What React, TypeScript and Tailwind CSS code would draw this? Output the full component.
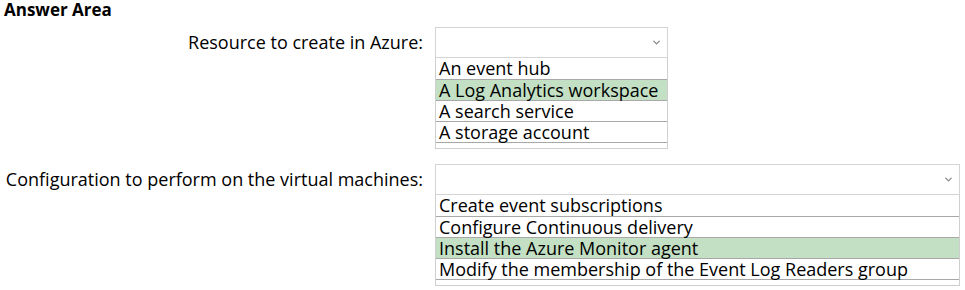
import { ChevronDown } from "lucide-react";

const font = { fontFamily: '"Open Sans", "Noto Sans", sans-serif' };

interface DropProps {
  readonly label: string;
  readonly width: string;
  readonly options: string[];
  readonly picked: number;
}

function Drop({ label, width, options, picked }: DropProps) {
  return (
    <div className="flex items-start">
      {/* label column */}
      <div className="w-[427px] h-[31px] flex items-center justify-end pr-[4px] text-[18px] text-black">
        {label}
      </div>

      {/* select + open list */}
      <div className={`ml-[8px] ${width}`}>
        <div className="h-[31px] border border-[#d4d4d4] flex items-center justify-end pr-[5px]">
          <ChevronDown className="w-[11px] h-[11px] text-[#8a8a8a]" strokeWidth={3} />
        </div>
        <div className="border border-t-0 border-[#cfcfcf] pb-[5px]">
          <div className="border-b border-[#a8a8a8]">
            {options.map((o, i) => (
              <div
                key={o}
                className={`h-[21px] leading-[20px] pl-[3px] text-[18px] text-black whitespace-nowrap ${
                  i > 0 ? "border-t border-[#a8a8a8]" : ""
                } ${i === picked ? "bg-[#c3e0c4]" : ""}`}
              >
                {o}
              </div>
            ))}
          </div>
        </div>
      </div>
    </div>
  );
}

export default function App() {
  return (
    <div className="w-[965px] h-[290px] bg-white overflow-hidden" style={font}>
      <div className="pl-[4px] h-[27px] text-[17px] font-bold leading-[20px] text-black">
        Answer Area
      </div>

      <Drop
        label="Resource to create in Azure:"
        width="w-[233px]"
        picked={1}
        options={[
          "An event hub",
          "A Log Analytics workspace",
          "A search service",
          "A storage account",
        ]}
      />

      <div className="h-[15px]" />

      <Drop
        label="Configuration to perform on the virtual machines:"
        width="w-[525px]"
        picked={2}
        options={[
          "Create event subscriptions",
          "Configure Continuous delivery",
          "Install the Azure Monitor agent",
          "Modify the membership of the Event Log Readers group",
        ]}
      />
    </div>
  );
}
